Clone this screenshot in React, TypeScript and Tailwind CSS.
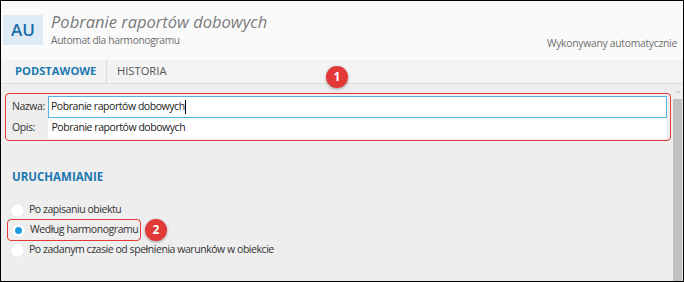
import { ChevronUp } from "lucide-react";

const font = "font-['Open_Sans','Noto_Sans',sans-serif]";
const body = "text-[10.5px] tracking-[-0.45px]";

function Radio({ checked, label }: { checked?: boolean; label: string }) {
  return (
    <div className="flex items-center h-[20px] gap-[5px] pl-[6px] whitespace-nowrap">
      <span className="w-[13px] h-[13px] rounded-full bg-white flex items-center justify-center shadow-[0_0_1px_rgba(0,0,0,0.15)]">
        {checked && <span className="w-[7px] h-[7px] rounded-full bg-[#1a9be0]" />}
      </span>
      <span className={`${body} text-[#333]`}>{label}</span>
    </div>
  );
}

function Badge({ n, className }: { n: string; className: string }) {
  return (
    <span
      className={`absolute w-[22px] h-[22px] rounded-full bg-[#e23838] text-white text-[12px] font-bold flex items-center justify-center shadow-[0_1px_3px_rgba(0,0,0,0.35)] ${className}`}
    >
      {n}
    </span>
  );
}

export default function App() {
  return (
    <div className={`${font} relative w-[684px] h-[282px] border border-black bg-[#eeeeee] flex flex-col overflow-hidden`}>
      {/* header */}
      <div className="h-[59px] bg-[#fafafa] flex items-center pl-[2px] pr-[6px]">
        <div className="w-[40px] h-[30px] bg-[#dfebf4] flex items-center justify-center text-[#1a6cae] text-[17px] font-semibold mt-[-2px]">
          AU
        </div>
        <div className="flex flex-col ml-[8px] mt-[-4px]">
          <span className="italic text-[16.5px] leading-[22px] text-[#7b7b7b]">Pobranie raportów dobowych</span>
          <span className="text-[10.2px] tracking-[-0.3px] leading-[14px] text-[#6e6e6e]">Automat dla harmonogramu</span>
        </div>
        <span className="ml-auto self-end mb-[9px] text-[10.3px] tracking-[-0.25px] text-[#6e6e6e]">
          Wykonywany automatycznie
        </span>
      </div>

      {/* tabs */}
      <div className="h-[24px] bg-[#f3f3f3] border-b border-[#dedede] flex items-stretch">
        <div className="w-[106px] border-r border-[#dcdcdc] flex items-center pl-[14px] text-[11.2px] font-bold text-[#1b78b0]">
          PODSTAWOWE
        </div>
        <div className="flex items-center pl-[10px] text-[11.2px] text-[#555]">HISTORIA</div>
      </div>

      {/* content */}
      <div className="flex-1 flex">
        <div className="flex-1 flex flex-col pt-[9px] pl-[4px] pr-[2px]">
          <div className="border-[1.5px] border-[#e53935] rounded-[4px] px-[3px] py-[1.5px] flex flex-col">
            <div className="flex items-center h-[22px]">
              <span className={`w-[39px] pl-[3px] ${body} text-[#333]`}>Nazwa:</span>
              <div className={`flex-1 h-[22px] bg-white border-[1.5px] border-[#52b4e0] flex items-center pl-[2px] ${body} text-[#222]`}>
                Pobranie raportów dobowych<span className="w-px h-[14px] bg-black" />
              </div>
            </div>
            <div className="flex items-center h-[21px]">
              <span className={`w-[39px] pl-[3px] ${body} text-[#333]`}>Opis:</span>
              <div className={`flex-1 h-[21px] bg-white flex items-center pl-[3.5px] ${body} text-[#222]`}>
                Pobranie raportów dobowych
              </div>
            </div>
          </div>

          <div className="mt-[27px] pl-[7px] text-[11.5px] font-bold text-[#1b78b0]">URUCHAMIANIE</div>

          <div className="mt-[15px] flex flex-col">
            <Radio label="Po zapisaniu obiektu" />
            <div className="border-[1.5px] border-[#e53935] rounded-[4px] w-[134px] h-[22px] ml-[2px] flex items-center -my-[1px]">
              <div className="ml-[-2px]">
                <Radio checked label="Według harmonogramu" />
              </div>
            </div>
            <Radio label="Po zadanym czasie od spełnienia warunków w obiekcie" />
          </div>
        </div>

        {/* scrollbar */}
        <div className="w-[9px] flex flex-col mr-[1px]">
          <div className="h-[15px] flex items-center justify-center text-[#777]">
            <ChevronUp size={8} strokeWidth={1.5} />
          </div>
          <div className="flex-1 bg-[#c1c1c1]" />
        </div>
      </div>

      <Badge n="1" className="left-[325px] top-[65px]" />
      <Badge n="2" className="left-[144px] top-[218px]" />
    </div>
  );
}
